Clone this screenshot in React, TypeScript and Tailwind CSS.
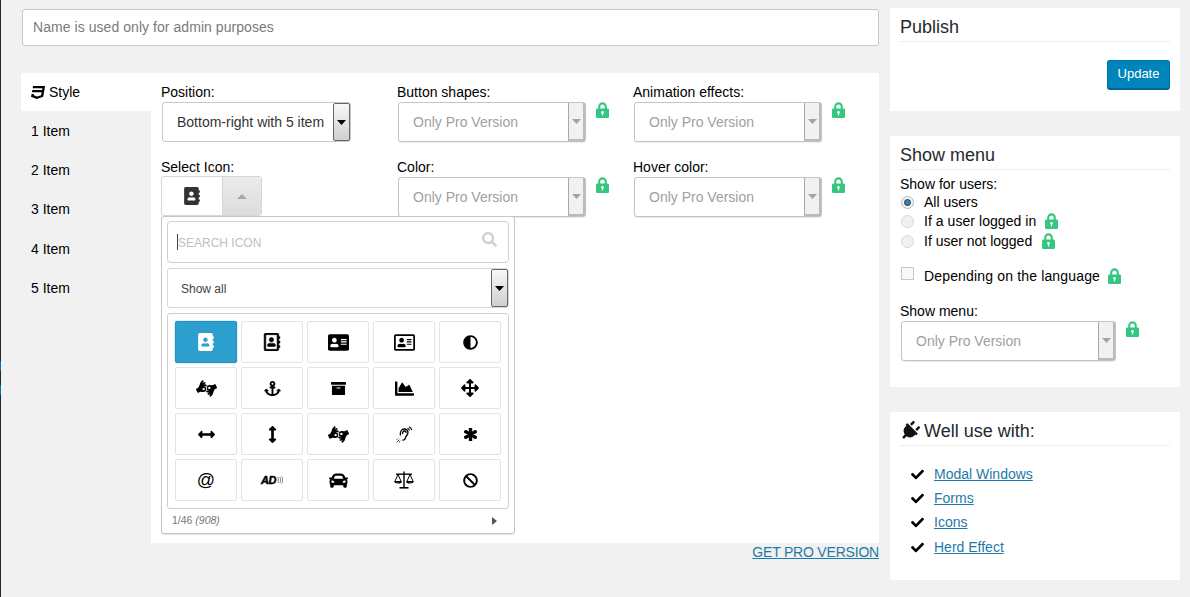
import React from "react";
import {
  FaAddressBook, FaRegAddressBook, FaAddressCard, FaRegAddressCard, FaAdjust,
  FaAmericanSignLanguageInterpreting, FaAnchor, FaArchive, FaChartArea, FaArrowsAlt,
  FaArrowsAltH, FaArrowsAltV, FaAsterisk, FaCar, FaBan, FaCss3, FaPlug, FaCheck, FaSearch,
} from "react-icons/fa";

const Lock = ({ className = "" }: { className?: string }) => (
  <svg width="13" height="16" viewBox="0 0 13 16" className={"shrink-0 " + className}>
    <path d="M2.2 7V4.6a4.3 4.3 0 0 1 8.6 0V7H8.7V4.6a2.2 2.2 0 0 0-4.4 0V7z" fill="#35c680" />
    <rect x="0" y="6.6" width="13" height="9.4" rx="1.2" fill="#35c680" />
    <circle cx="6.5" cy="10.2" r="1.3" fill="#fff" />
    <rect x="5.9" y="10.4" width="1.2" height="3" fill="#fff" />
  </svg>
);

const Arrow = ({ color = "#000" }: { color?: string }) => (
  <svg width="9" height="5" viewBox="0 0 9 5"><path d="M0 0h9L4.5 5z" fill={color} /></svg>
);

function ProSelect({ label, w = "w-[188px]" }: { label: string; w?: string }) {
  return (
    <div className="flex flex-col">
      <span className="text-[14px] leading-[16px] text-black">{label}</span>
      <div className="flex items-start gap-[10px] mt-[2px] ml-px">
        <div className={`${w} h-[40px] flex items-center border border-[#c4c4c4] rounded-[3px] bg-white shadow-[0_1px_1px_rgba(0,0,0,0.08)]`}>
          <span className="pl-[14px] text-[14px] text-[#a0a0a0]">Only Pro Version</span>
          <div className="ml-auto h-[38px] w-[17px] bg-[#f1f1f1] border-l border-r-2 border-b-2 border-l-[#a8a8a8] border-r-[#bbb] border-b-[#bbb] flex items-center justify-center">
            <Arrow color="#a3a3a3" />
          </div>
        </div>
        <Lock />
      </div>
    </div>
  );
}

const EarIcon = () => (
  <svg width="17" height="17" viewBox="0 0 17 17" fill="none" stroke="#000" strokeWidth="1.3">
    <path d="M4.5 9.5C3.6 5.5 5.8 3 8.4 3c2.4 0 3.9 1.9 3.5 4.2-.3 1.9-2 2.6-2.3 4.2-.3 1.8-1.6 3-3.1 2.6" />
    <path d="M6.6 8c-.2-1.8.6-3 2-3 1.2 0 1.7 1 1.3 2" />
    <path d="M11.5 2.2c1 .5 1.7 1.3 2 2.3M13 .8c1.4.7 2.4 1.8 2.9 3.2" strokeWidth="1.1" />
    <path d="M.8 16.2l3-3M3.2 16.2l1.6-1.6M.8 13.6l1.6-1.6" strokeWidth="1" strokeDasharray="1.2 0.8" />
  </svg>
);

const ScaleIcon = () => (
  <svg width="20" height="18" viewBox="0 0 20 18" fill="none" stroke="#000" strokeWidth="1">
    <path d="M2 3.2h16" strokeWidth="1.4" />
    <path d="M10 0.5V16" strokeWidth="1.4" />
    <path d="M5.5 16.8h9" strokeWidth="1.6" />
    <path d="M4 3.5L0.8 10.5h6.4zM16 3.5l-3.2 7h6.4z" />
    <path d="M0.5 10.5c.6 1.8 6.4 1.8 7 0M12.5 10.5c.6 1.8 6.4 1.8 7 0" strokeWidth="1.2" />
  </svg>
);

const AdIcon = () => (
  <span className="flex items-center text-black">
    <span className="text-[11px] leading-none font-bold italic tracking-[-0.5px] [-webkit-text-stroke:0.5px_#000]">AD</span>
    <svg width="6" height="8" viewBox="0 0 6 8" fill="none" stroke="#888" strokeWidth="1" className="ml-px">
      <path d="M.8 1c.9 2 .9 4 0 6M2.8.8c1.1 2.2 1.1 4.2 0 6.4M4.8.5c1.3 2.4 1.3 4.6 0 7" />
    </svg>
  </span>
);

const AtIcon = () => <span className="text-[18px] leading-none text-black">@</span>;

const cells: React.ReactNode[] = [
  <FaAddressBook className="text-[18px]" />,
  <FaRegAddressBook className="text-[18px] [&_path]:stroke-black [&_path]:stroke-[16px]" />,
  <FaAddressCard className="text-[21px]" />,
  <FaRegAddressCard className="text-[21px]" />,
  <FaAdjust className="text-[15px]" />,
  <FaAmericanSignLanguageInterpreting className="text-[21px]" />,
  <FaAnchor className="text-[17px]" />,
  <FaArchive className="text-[15px]" />,
  <FaChartArea className="text-[19px]" />,
  <FaArrowsAlt className="text-[18px]" />,
  <FaArrowsAltH className="text-[17px]" />,
  <FaArrowsAltV className="text-[17px]" />,
  <FaAmericanSignLanguageInterpreting className="text-[21px]" />,
  <EarIcon />,
  <FaAsterisk className="text-[13px] [&_path]:stroke-black [&_path]:stroke-[50px]" />,
  <AtIcon />,
  <AdIcon />,
  <FaCar className="text-[19px]" />,
  <ScaleIcon />,
  <FaBan className="text-[15px]" />,
];

function IconPopup() {
  return (
    <div className="absolute left-[10px] top-[143px] w-[354px] h-[318px] bg-white border border-[#c6c6c6] rounded-[3px] shadow-[0_1px_1px_rgba(0,0,0,0.1)] px-[5px] pt-[4px] z-10">
      <div className="h-[42px] border-[1.5px] border-[#d0d0d0] rounded-[4px] flex items-center pl-[9px] pr-[11px]">
        <span className="w-px h-[16px] bg-[#444]" />
        <span className="text-[12px] text-[#c0c0c0] pt-[2px]">SEARCH ICON</span>
        <FaSearch className="ml-auto text-[#cfcfcf] text-[15px] -mt-[5px]" />
      </div>
      <div className="h-[40px] mt-[5px] border border-[#d9d9d9] rounded-[3px] flex items-center pl-[13px]">
        <span className="text-[12px] text-[#444] pt-[2px]">Show all</span>
        <div className="ml-auto h-[38px] w-[17px] bg-gradient-to-b from-[#f8f8f8] to-[#cfcfcf] border border-[#666] rounded-[2px] flex items-center justify-center">
          <Arrow />
        </div>
      </div>
      <div className="mt-[5px] h-[196px] border border-[#cfcfcf] rounded-[3px] pl-[7px] pt-[7px] grid grid-cols-[repeat(5,62px)] auto-rows-[42px] gap-x-[4px] gap-y-[4px]">
        {cells.map((c, i) => (
          <div
            key={i}
            className={
              "flex items-center justify-center rounded-[2px] " +
              (i === 0
                ? "bg-[#2d9fcf] border border-[#2893c2] shadow-[0_0_2px_#7fc4e6] text-white"
                : "border border-[#e4e4e4] text-black")
            }
          >
            {c}
          </div>
        ))}
      </div>
      <div className="flex items-center justify-between h-[22px] mt-[1px] pl-[5px] pr-[12px] text-[10.5px] text-[#777]">
        <span>1/46 <em>(908)</em></span>
        <svg width="5" height="8" viewBox="0 0 5 8"><path d="M0 0l5 4-5 4z" fill="#555" /></svg>
      </div>
    </div>
  );
}

function Card({ title, children, className = "" }: { title: React.ReactNode; children: React.ReactNode; className?: string }) {
  return (
    <section className={"bg-white px-[10px] " + className}>
      <div className="h-[34px] border-b border-[#eeeeee] flex items-end pb-[3px] text-[18px] leading-[22px] text-[#23282d]">{title}</div>
      {children}
    </section>
  );
}

const navItems: [string, string][] = [
  ["1 Item", "h-[40px]"],
  ["2 Item", "h-[39px]"],
  ["3 Item", "h-[39px]"],
  ["4 Item", "h-[40px]"],
  ["5 Item", "h-[39px]"],
];

export default function App() {
  return (
    <div className="w-[1190px] h-[597px] overflow-hidden bg-[#f1f1f1] flex font-['Liberation_Sans',Arial,sans-serif] text-[14px]">
      <div className="w-px shrink-0 bg-[#23282d] flex flex-col">
        <div className="h-[361px]" />
        <div className="h-[10px] bg-[#0073aa]" />
        <div className="h-[14px]" />
        <div className="h-[10px] bg-[#0073aa]" />
      </div>
      <main className="w-[858px] ml-[20px] mt-[9px] shrink-0 flex flex-col">
        <div className="ml-px h-[37px] bg-white border border-[#c8c8c8] rounded-[3px] flex items-center pl-[10px] text-[14px] text-[#7a7a7a] tracking-[0.055px]">
          Name is used only for admin purposes
        </div>
        <div className="mt-[27px] h-[470px] flex">
          <nav className="w-[130px] shrink-0 flex flex-col text-black">
            <div className="h-[38px] bg-white flex items-center pl-[10px] gap-[3px]">
              <FaCss3 className="text-[15px]" /> Style
            </div>
            {navItems.map(([t, h]) => (
              <div key={t} className={"flex items-center pl-[10px] " + h}>{t}</div>
            ))}
          </nav>
          <div className="flex-1 bg-white relative pl-[10px] pt-[11px]">
            <div className="grid grid-cols-[236px_236px_auto] gap-y-[17px]">
              <div className="flex flex-col">
                <span className="leading-[16px] text-black">Position:</span>
                <div className="mt-[2px] ml-px w-[189px] h-[40px] border border-[#c8c8c8] rounded-[3px] flex items-center pl-[14px] text-[14px] text-[#333]">
                  Bottom-right with 5 item
                  <div className="ml-auto h-[38px] w-[17px] bg-gradient-to-b from-[#f8f8f8] to-[#cfcfcf] border border-[#666] rounded-[2px] flex items-center justify-center">
                    <Arrow />
                  </div>
                </div>
              </div>
              <ProSelect label="Button shapes:" />
              <ProSelect label="Animation effects:" />
              <div className="flex flex-col">
                <span className="leading-[16px] text-black">Select Icon:</span>
                <div className="mt-px w-[101px] h-[40px] border border-[#d6d6d6] rounded-[3px] flex">
                  <div className="w-[60px] flex items-center justify-center text-[#333]">
                    <FaAddressBook className="text-[18px]" />
                  </div>
                  <div className="flex-1 bg-gradient-to-b from-[#ececec] to-[#dcdcdc] border-l border-[#d6d6d6] flex items-center justify-center rounded-r-[3px]">
                    <svg width="10" height="5" viewBox="0 0 10 5"><path d="M0 5h10L5 0z" fill="#a8a8a8" /></svg>
                  </div>
                </div>
              </div>
              <ProSelect label="Color:" />
              <ProSelect label="Hover color:" />
            </div>
            <IconPopup />
          </div>
        </div>
        <div className="text-right -mt-px">
          <a className="text-[14px] leading-[18px] underline text-[#1f7aa8] tracking-[-0.2px]">GET PRO VERSION</a>
        </div>
      </main>
      <aside className="ml-[11px] w-[290px] shrink-0 mt-[8px] flex flex-col">
        <Card title="Publish" className="h-[103px]">
          <div className="flex justify-end mt-[18px]">
            <button className="w-[63px] h-[29px] pb-[2px] bg-[#0085ba] border border-[#0073aa] border-b-[#006799] rounded-[3px] text-white text-[13px] shadow-[0_1px_0_#006799]">Update</button>
          </div>
        </Card>
        <Card title="Show menu" className="mt-[25px] h-[251px]">
          <div className="mt-[6px] leading-[16px] text-[14px] text-black">Show for users:</div>
          <div className="flex items-center h-[20px]">
            <span className="w-[13px] h-[13px] ml-px rounded-full border border-[#b4b9be] bg-[#f2f2f2] flex items-center justify-center">
              <span className="w-[7px] h-[7px] rounded-full bg-[#1e8cbe] border border-[#333]" />
            </span>
            <span className="ml-[10px]">All users</span>
          </div>
          <div className="flex items-center h-[20px] -mt-px">
            <span className="w-[13px] h-[13px] ml-px rounded-full border border-[#d8d8d8] bg-[#f0f0f0]" />
            <span className="ml-[10px] tracking-[0.05px]">If a user logged in</span>
            <Lock className="ml-[9px]" />
          </div>
          <div className="flex items-center h-[20px]">
            <span className="w-[13px] h-[13px] ml-px rounded-full border border-[#d8d8d8] bg-[#f0f0f0]" />
            <span className="ml-[10px]">If user not logged</span>
            <Lock className="ml-[10px]" />
          </div>
          <div className="flex items-center h-[20px] mt-[15px]">
            <span className="w-[13px] h-[13px] ml-px mb-[5px] border border-[#c8c8c8] bg-[#f8f8f8]" />
            <span className="ml-[10px] tracking-[0.16px]">Depending on the language</span>
            <Lock className="ml-[8px]" />
          </div>
          <div className="mt-[17px]"><ProSelect label="Show menu:" w="w-[215px]" /></div>
        </Card>
        <Card
          className="mt-[25px] h-[168px]"
          title={<span className="flex items-center gap-[4px]"><FaPlug className="text-[20px] text-[#111] rotate-45" /> Well use with:</span>}
        >
          <ul className="mt-[16px] pl-[11px] flex flex-col">
            {["Modal Windows", "Forms", "Icons", "Herd Effect"].map((t, i) => (
              <li key={t} className={"flex items-center gap-[10px] " + (i === 2 ? "h-[25px]" : "h-[24px]")}>
                <FaCheck className="text-[13px] text-black" />
                <a className="underline text-[#1f7aa8]">{t}</a>
              </li>
            ))}
          </ul>
        </Card>
      </aside>
    </div>
  );
}
